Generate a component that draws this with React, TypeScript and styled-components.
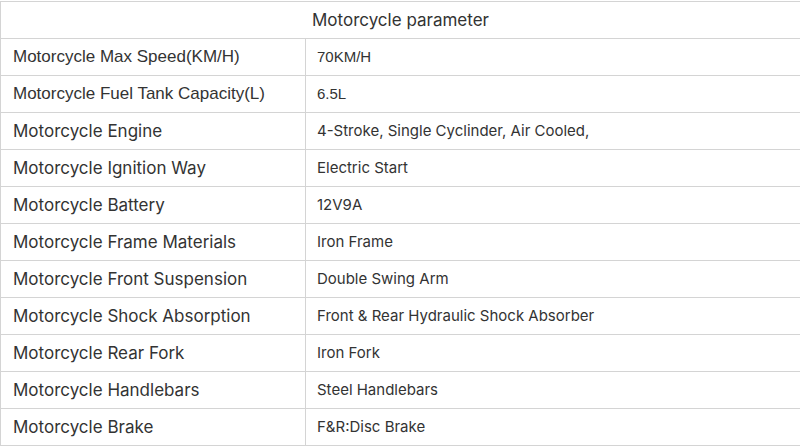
import React from "react";
import styled, { createGlobalStyle, css } from "styled-components";

const Global = createGlobalStyle`
  html, body { margin: 0; padding: 0; background: #fff; }
  body { font-family: Inter, "Noto Sans", sans-serif; color: #333; }
`;

const Wrap = styled.div`
  padding-top: 1px;
  width: 801px;
`;

const Table = styled.table`
  width: 801px;
  border-collapse: collapse;
  table-layout: fixed;
`;

const LabelCol = styled.col`
  width: 305px;
`;

const HeadCell = styled.th`
  height: 36px;
  padding: 0;
  border: 1px solid #d4d4d4;
  font-weight: 400;
  font-size: 17px;
  text-align: center;
  color: #333;
`;

const arial = css`
  font-family: "Liberation Sans", Arial, sans-serif;
`;

const LabelCell = styled.td<{ $arial?: boolean }>`
  height: 36px;
  padding: 0 0 0 12px;
  border: 1px solid #d4d4d4;
  font-size: 17px;
  color: #333;
  white-space: nowrap;
  ${(p) => p.$arial && arial}
`;

const ValueCell = styled.td<{ $arial?: boolean }>`
  height: 34px;
  padding: 0 0 2px 11px;
  border: 1px solid #d4d4d4;
  font-size: 15px;
  color: #333;
  white-space: nowrap;
  ${(p) => p.$arial && arial}
`;

const rows: [string, string, boolean][] = [
  ["Motorcycle Max Speed(KM/H)", "70KM/H", true],
  ["Motorcycle Fuel Tank Capacity(L)", "6.5L", true],
  ["Motorcycle Engine", "4-Stroke, Single Cyclinder, Air Cooled,", false],
  ["Motorcycle Ignition Way", "Electric Start", false],
  ["Motorcycle Battery", "12V9A", false],
  ["Motorcycle Frame Materials", "Iron Frame", false],
  ["Motorcycle Front Suspension", "Double Swing Arm", false],
  ["Motorcycle Shock Absorption", "Front & Rear Hydraulic Shock Absorber", false],
  ["Motorcycle Rear Fork", "Iron Fork", false],
  ["Motorcycle Handlebars", "Steel Handlebars", false],
  ["Motorcycle Brake", "F&R:Disc Brake", false],
];

export default function App() {
  return (
    <Wrap>
      <Global />
      <Table>
        <colgroup>
          <LabelCol />
          <col />
        </colgroup>
        <thead>
          <tr>
            <HeadCell colSpan={2}>Motorcycle parameter</HeadCell>
          </tr>
        </thead>
        <tbody>
          {rows.map(([k, v, a]) => (
            <tr key={k}>
              <LabelCell $arial={a}>{k}</LabelCell>
              <ValueCell $arial={a}>{v}</ValueCell>
            </tr>
          ))}
        </tbody>
      </Table>
    </Wrap>
  );
}
